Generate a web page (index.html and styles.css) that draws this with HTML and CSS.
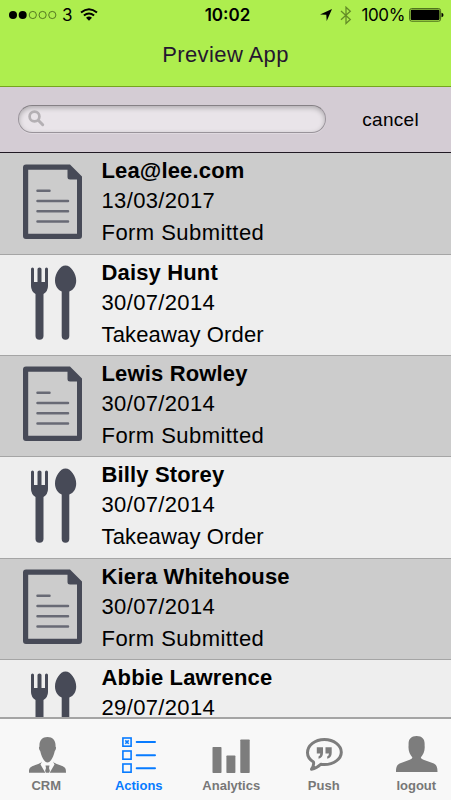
FILE: index.html
```html
<!DOCTYPE html>
<html lang="en">
<head>
  <meta charset="UTF-8" />
  <meta name="viewport" content="width=device-width, initial-scale=1.0" />
  <title>Preview App</title>
  <link rel="stylesheet" href="styles.css">
</head>
<body>
  <!-- shared icons -->
  <svg class="sprite" width="0" height="0">
    <symbol id="icon-form" viewBox="0 0 60 76">
      <path fill="#474a57" fill-rule="evenodd" d="M4 .5H48L60 12.500V72Q60 75 57 75H4Q1 75 1 72V3.500Q1 .5 4 .5ZM6.200 5.700V69.800H55V15.500H48Q45.500 15.500 45.500 13V5.700Z"/>
      <path stroke="#686a75" stroke-width="2.500" stroke-linecap="round" d="M15.500 26.800H27.500M15.500 37H46M15.500 47.200H46M15.500 57.400H46"/>
    </symbol>
    <symbol id="icon-food" viewBox="0 0 60 76">
      <path fill="#474a57" d="M9 4Q9 2.500 10.500 2.500T12 4V17H15.500V4Q15.500 2.500 17.500 2.500T19.500 4V17H23V4Q23 2.500 24.500 2.500T26 4V21Q26 26 21.500 29V71Q21.500 74.700 17.500 74.700T13.500 71V29Q9 26 9 21Z"/>
      <path fill="#474a57" d="M43.500 .5C49 .5 54.200 8.500 54.200 15.500C54.200 21 51.500 25 47.300 26.500V71Q47.300 74.700 43.500 74.700T39.700 71V26.500C36 25 33 21 33 15.500C33 8.500 38 .5 43.500 .5Z"/>
    </symbol>
  </svg>

  <div class="app">
    <header class="header">
      <div class="status-bar">
        <div class="status-left">
          <svg class="signal" width="48" height="10" viewBox="0 0 48 10">
            <circle cx="4" cy="5" r="4"/>
            <circle cx="13.700" cy="5" r="4"/>
            <g fill="none" stroke="#405c16" stroke-width=".8">
              <circle cx="23.800" cy="5" r="3.600"/>
              <circle cx="33.600" cy="5" r="3.600"/>
              <circle cx="43.300" cy="5" r="3.600"/>
            </g>
          </svg>
          <span class="carrier">3</span>
          <svg class="wifi" width="18" height="13" viewBox="0 0 18 13">
            <g fill="none" stroke="#000" stroke-width="2">
              <path d="M1 4.600Q9-2.200 17 4.600"/>
              <path d="M3.900 7.600Q9 3.400 14.100 7.600"/>
            </g>
            <path d="M9 12.700L6 9.700Q9 7.400 12 9.700Z"/>
          </svg>
        </div>
        <div class="clock">10:02</div>
        <div class="status-right">
          <svg class="location" width="12" height="12" viewBox="0 0 12 12">
            <path d="M12 0L6.700 12L6.300 5.800L0 5.400Z"/>
          </svg>
          <svg class="bluetooth" width="12" height="19" viewBox="0 0 12 19">
            <path fill="none" stroke="#648c27" stroke-width="1.300" d="M1 5L10.300 13.500L6 17.500V1.200L10.300 5.200L1 13.700"/>
          </svg>
          <span class="percent">100%</span>
          <svg class="battery" width="35" height="14" viewBox="0 0 35 14">
            <rect x=".6" y=".6" width="31" height="12.600" rx="2" fill="none" stroke="#48671a" stroke-width="1"/>
            <rect x="1.700" y="1.700" width="28.800" height="10.400" rx="1"/>
            <path d="M32.500 4.800Q34.500 5 34.500 7T32.500 9.200Z"/>
          </svg>
        </div>
      </div>
      <h1>Preview App</h1>
    </header>

    <div class="search-bar">
      <div class="search-box">
        <svg width="17" height="17" viewBox="0 0 17 17">
          <circle cx="6.500" cy="6.500" r="4.900" fill="none" stroke="#b4b0b4" stroke-width="2.700"/>
          <path stroke="#b4b0b4" stroke-width="3" stroke-linecap="round" d="M10.300 10.300L14.700 14.700"/>
        </svg>
      </div>
      <a class="cancel">cancel</a>
    </div>

    <ul class="list">
      <li class="item">
        <svg class="item-icon"><use href="#icon-form"/></svg>
        <div class="item-text">
          <div class="name">Lea@lee.com</div>
          <div class="date">13/03/2017</div>
          <div class="type">Form Submitted</div>
        </div>
      </li>
      <li class="item">
        <svg class="item-icon"><use href="#icon-food"/></svg>
        <div class="item-text">
          <div class="name">Daisy Hunt</div>
          <div class="date">30/07/2014</div>
          <div class="type order">Takeaway Order</div>
        </div>
      </li>
      <li class="item">
        <svg class="item-icon"><use href="#icon-form"/></svg>
        <div class="item-text">
          <div class="name">Lewis Rowley</div>
          <div class="date">30/07/2014</div>
          <div class="type">Form Submitted</div>
        </div>
      </li>
      <li class="item">
        <svg class="item-icon"><use href="#icon-food"/></svg>
        <div class="item-text">
          <div class="name">Billy Storey</div>
          <div class="date">30/07/2014</div>
          <div class="type order">Takeaway Order</div>
        </div>
      </li>
      <li class="item">
        <svg class="item-icon"><use href="#icon-form"/></svg>
        <div class="item-text">
          <div class="name">Kiera Whitehouse</div>
          <div class="date">30/07/2014</div>
          <div class="type">Form Submitted</div>
        </div>
      </li>
      <li class="item">
        <svg class="item-icon"><use href="#icon-food"/></svg>
        <div class="item-text">
          <div class="name">Abbie Lawrence</div>
          <div class="date">29/07/2014</div>
        </div>
      </li>
    </ul>

    <nav class="tabs">
      <a class="tab">
        <svg width="44" height="40" viewBox="0 0 44 40">
          <path d="M23.500 1C29 1 32 5 31.500 10.500C32.500 11 32 14 30.800 15C29.800 19 28.500 22.500 27 24.200Q23.500 28.800 20 24.200C18.500 22.500 17.200 19 16.200 15C15 14 14.500 11 15.500 10.500C15 5 18 1 23.500 1Z"/>
          <path d="M18 25.500L16.500 28.500L21.300 36.800H5C5 32.500 5.500 31.500 9.500 29.800C13.500 28.200 16.500 27.500 18 25.500ZM29 25.500L30.500 28.500L25.700 36.800H42C42 32.500 41.500 31.500 37.500 29.800C33.500 28.200 30.500 27.500 29 25.500Z"/>
          <path d="M21.500 29.500H25.500L25 32L25.900 35L25 36.800H22L21.100 35L22 32Z"/>
        </svg>
        <span>CRM</span>
      </a>
      <a class="tab active">
        <svg width="44" height="40" viewBox="0 0 44 40">
          <g fill="none" stroke="#077bff" stroke-width="1.600">
            <rect x="5.900" y="2" width="8.200" height="8.200"/>
            <rect x="5.900" y="15" width="8.200" height="8.200"/>
            <rect x="5.900" y="28" width="8.200" height="8.200"/>
            <path d="M8.300 4.400L11.700 7.800M11.700 4.400L8.300 7.800"/>
            <path stroke-width="2" stroke-linecap="round" d="M19.700 6H38M19.700 19.200H38M19.700 32.300H38"/>
          </g>
        </svg>
        <span>Actions</span>
      </a>
      <a class="tab">
        <svg width="44" height="40" viewBox="0 0 44 40">
          <rect x="3.500" y="11" width="9" height="26" rx=".7"/>
          <rect x="17.400" y="19.500" width="9" height="17.500" rx=".7"/>
          <rect x="31.300" y="3.500" width="9.400" height="33.500" rx=".7"/>
        </svg>
        <span>Analytics</span>
      </a>
      <a class="tab">
        <svg width="44" height="40" viewBox="0 0 44 40">
          <path fill="none" stroke="#7d7d7d" stroke-width="3" stroke-linejoin="round" d="M11.500 26C7.500 23.500 5.500 20.500 5.500 16.700C5.500 9.500 12.800 3.500 22.400 3.500S39.300 9.500 39.300 16.200S31.800 28.500 22.400 28.500Q20.300 28.500 18.800 28.200C16 31 13.500 32.500 9.500 33.200C11.500 30.500 12 28.500 11.500 26Z"/>
          <path d="M14.800 11.300H21V17C21 20 19.500 22.200 16.500 22.700V20.500Q18.200 19.800 18.300 17.500H14.800ZM23.500 11.300H29.700V17C29.700 20 28.200 22.200 25.200 22.700V20.500Q26.900 19.800 27 17.500H23.500Z"/>
        </svg>
        <span>Push</span>
      </a>
      <a class="tab">
        <svg width="44" height="40" viewBox="0 0 44 40">
          <path d="M22.700 0C28.500 0 31 3.500 30.600 9C31.200 15 29.500 18 26.800 21.500Q27 23 29.500 23.700L38.500 27C42.500 28.500 43.500 30.500 43.500 36H2C2 30.500 3 28.500 7 27L15.700 23.700Q18.200 23 18.400 21.500C15.700 18 14 15 14.600 9C14.200 3.500 16.700 0 22.700 0Z"/>
        </svg>
        <span>logout</span>
      </a>
    </nav>
  </div>
</body>
</html>
```
FILE: styles.css
```css
* {
  box-sizing: border-box;
}

body {
  margin: 0;
  font-family: "Liberation Sans", Arial, sans-serif;
  color: #000;
}

.sprite {
  display: block;
}

.app {
  display: flex;
  flex-direction: column;
  height: 100vh;
  overflow: hidden;
}

.header {
  flex: none;
  height: 87px;
  background: #aeee4e;
  border-bottom: 1px solid #75a51e;
}

.status-bar {
  display: grid;
  grid-template-columns: 1fr auto 1fr;
  height: 29px;
  padding: 0 7px 0 9px;
  font-family: Inter, "Liberation Sans", sans-serif;
  font-size: 17px;
  line-height: 30px;
}

.status-left,
.status-right {
  display: flex;
  align-items: center;
}

.status-right {
  justify-content: flex-end;
}

.carrier {
  margin: 0 7px 0 5px;
}

.wifi {
  margin-bottom: 2px;
}

.clock {
  padding-left: 2px;
  font-weight: 600;
}

.bluetooth {
  margin: 0 10px 0 8px;
}

.percent {
  margin-right: 4px;
  letter-spacing: -0.4px;
}

h1 {
  margin: 12px 0 0;
  font-size: 22px;
  font-weight: 400;
  line-height: 28px;
  letter-spacing: 0.4px;
  text-align: center;
  color: #25162f;
}

.search-bar {
  display: flex;
  flex: none;
  align-items: center;
  height: 66px;
  padding: 0 32px 0 18px;
  background: #d4ccd4;
  border-bottom: 1px solid #211a24;
}

.search-box {
  display: flex;
  align-items: center;
  width: 308px;
  height: 28px;
  margin-bottom: 2px;
  padding-left: 9px;
  background: #e9e4e9;
  border: 1px solid #99939a;
  border-top-color: #858085;
  border-radius: 14px;
  box-shadow: inset 0 2px 5px rgba(0, 0, 0, 0.25), 0 1px 0 #dfd9df;
}

.cancel {
  margin-left: auto;
  font-size: 19px;
  letter-spacing: 0.3px;
}

.list {
  flex: 1;
  min-height: 0;
  margin: 0;
  padding: 0;
  overflow: hidden;
  list-style: none;
}

.item {
  display: flex;
  height: 101.400px;
  padding: 3px 0 0 22px;
  background: #eee;
  border-bottom: 1px solid #a5a5a5;
}

.item:nth-child(odd) {
  background: #ccc;
}

/* the first row is a touch taller */
.item:first-child {
  height: 101.600px;
}

.item-icon {
  flex: none;
  width: 60px;
  height: 76px;
  margin-top: 7.500px;
}

.item-text {
  margin-left: 19.500px;
  font-size: 22px;
  white-space: nowrap;
}

.name {
  font-weight: 700;
  line-height: 30px;
  letter-spacing: 0.15px;
}

.date {
  line-height: 29px;
  letter-spacing: 0.35px;
}

.type {
  line-height: 35px;
  letter-spacing: 0.45px;
}

.order {
  letter-spacing: 0.15px;
}

.tabs {
  display: flex;
  flex: none;
  height: 83px;
  overflow: hidden;
  background: #f8f8f8;
  border-top: 2px solid #a4a4a4;
}

.tab {
  display: flex;
  flex: none;
  flex-direction: column;
  align-items: center;
  width: 92.500px;
  padding-top: 17px;
  fill: #7d7d7d;
  color: #777;
  font-size: 13px;
  font-weight: 700;
  line-height: 20px;
}

.active {
  color: #077bff;
}
```
